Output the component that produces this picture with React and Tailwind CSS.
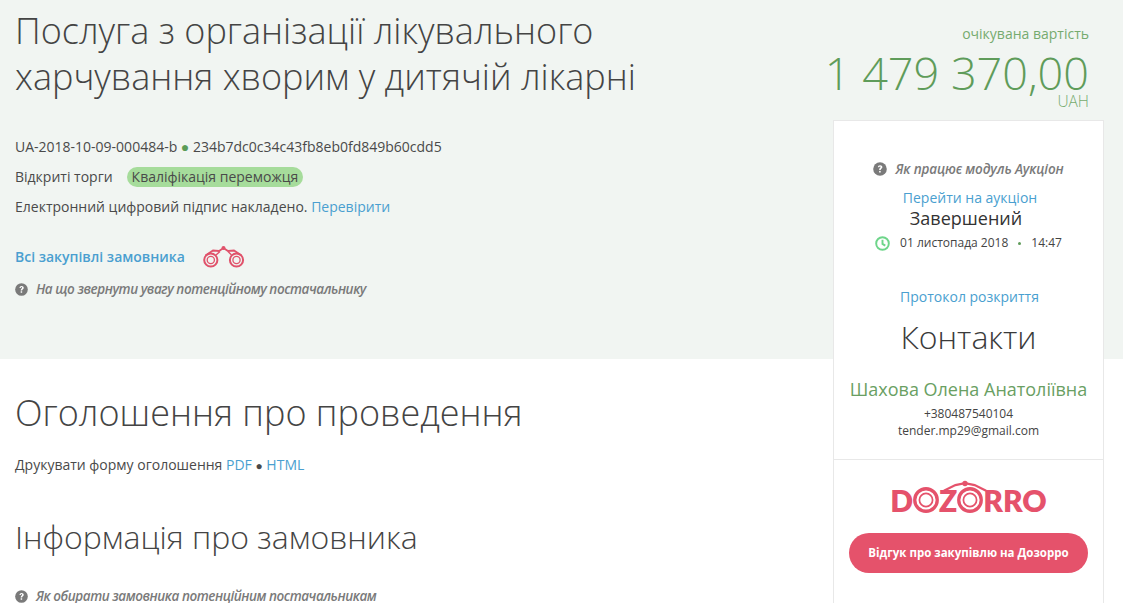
import React from "react";

const QuestionIcon = ({ className }) => (
  <svg viewBox="0 0 14 14" className={className}>
    <circle cx="7" cy="7" r="6.8" fill="#7a7a7a" />
    <path d="M4.8 5.3C4.9 4 5.9 3.2 7.1 3.2c1.3 0 2.3.8 2.3 1.9 0 1.7-1.7 1.6-1.7 3H6.1c0-2.1 1.6-2 1.6-3 0-.4-.3-.7-.7-.7-.5 0-.7.3-.8.9H4.8z" fill="#fff" />
    <rect x="6.1" y="8.9" width="1.6" height="1.6" fill="#fff" />
  </svg>
);

const Binoculars = ({ className }) => (
  <svg viewBox="0 0 42 23" className={className} fill="none" stroke="#e0526b">
    <circle cx="7.8" cy="15" r="6.6" strokeWidth="2" />
    <circle cx="7.8" cy="15" r="3.6" strokeWidth="1.3" />
    <circle cx="33.5" cy="15" r="6.6" strokeWidth="2" />
    <circle cx="33.5" cy="15" r="3.6" strokeWidth="1.3" />
    <path d="M2.5 10.5 L10 5.5 L16 6 L20.5 3 L25 6 L31 5.5 L38.5 10.5" strokeWidth="1.8" />
    <path d="M13 10 L17 6.5 M28.5 10 L25 6.5" strokeWidth="1.4" />
    <circle cx="20.5" cy="3" r="2" fill="#e0526b" stroke="none" />
  </svg>
);

const Ring = () => (
  <svg viewBox="0 0 30 30" className="w-[26px] h-[26px] shrink-0" fill="none" stroke="#e5526b">
    <circle cx="15" cy="15" r="13" strokeWidth="3.8" />
    <circle cx="15" cy="15" r="7.6" strokeWidth="2" />
  </svg>
);

const A = ({ children, className = "" }) => (
  <a href="#" className={"text-[#4a9fd0] " + className}>{children}</a>
);

export default function App() {
  return (
    <div className="h-[603px] overflow-hidden flex bg-[linear-gradient(#f1f5f2_359px,#ffffff_359px)] text-[#4a4a4a] font-['Open_Sans',sans-serif]">
      <main className="flex-1 min-w-0 pl-[15px]">
        <h1 className="mt-[8px] text-[36px] leading-[46px] font-light text-[#444]">
          Послуга з організації лікувального
          <br />
          харчування хворим у дитячій лікарні
        </h1>
        <div className="mt-[37px] text-[14px] leading-[20px]">
          UA-2018-10-09-000484-b <span className="text-[#5b9c57]">●</span> 234b7dc0c34c43fb8eb0fd849b60cdd5
        </div>
        <div className="mt-[10px] flex items-center text-[14px] leading-[20px]">
          <span>Відкриті торги</span>
          <span className="ml-[14px] rounded-full bg-[#a6dc9b] px-[5px]">Кваліфікація переможця</span>
        </div>
        <div className="mt-[10px] text-[14px] leading-[20px]">
          Електронний цифровий підпис накладено. <A>Перевірити</A>
        </div>
        <div className="mt-[28px] flex items-center">
          <A className="text-[14px] leading-[20px] font-semibold">Всі закупівлі замовника</A>
          <Binoculars className="ml-[18px] w-[42px] h-[23px]" />
        </div>
        <div className="mt-[11px] flex items-center text-[13.5px] tracking-[-0.45px] leading-[20px] italic font-semibold text-[#7a7a7a]">
          <QuestionIcon className="w-[13px] h-[13px] mr-[8px]" />
          На що звернути увагу потенційному постачальнику
        </div>
        <h2 className="mt-[91px] text-[36px] leading-[46px] font-light text-[#444]">Оголошення про проведення</h2>
        <div className="mt-[19px] text-[14px] leading-[20px]">
          Друкувати форму оголошення <A>PDF</A> <span className="text-[12px]">●</span> <A>HTML</A>
        </div>
        <h3 className="mt-[40px] text-[32px] leading-[42px] font-light text-[#444]">Інформація про замовника</h3>
        <div className="mt-[28px] flex items-center text-[13.5px] tracking-[-0.45px] leading-[20px] italic font-semibold text-[#7a7a7a]">
          <QuestionIcon className="w-[13px] h-[13px] mr-[8px]" />
          Як обирати замовника потенційним постачальникам
        </div>
      </main>

      <aside className="w-[271px] mr-[19px] shrink-0">
        <div className="h-[120px] pt-[24px] text-right pr-[15px] text-[#5f9c5a]">
          <div className="text-[14px] leading-[20px] text-[#76ab6f]">очікувана вартість</div>
          <div className="text-[45px] leading-[40px] font-light mt-[9px] whitespace-nowrap flex justify-end">1 479 370,00</div>
          <div className="text-[15.5px] leading-[14px] font-light mt-[1px] text-[#76ab6f]">UAH</div>
        </div>
        <div className="h-[483px] bg-white border-x border-t border-[#e8e8e8] text-center">
          <div className="pt-[38px] flex justify-center items-center text-[13.5px] tracking-[-0.15px] leading-[20px] italic font-semibold text-[#7a7a7a]">
            <QuestionIcon className="w-[14px] h-[14px] mr-[8px]" />
            Як працює модуль Аукціон
          </div>
          <A className="block mt-[9px] pl-[3px] text-[14px] leading-[20px]">Перейти на аукціон</A>
          <div className="-ml-[5px] -mt-[1px] text-[18px] leading-[22px] text-[#333]">Завершений</div>
          <div className="mt-[4px] flex justify-center items-center text-[12px] leading-[20px] text-[#444]">
            <svg viewBox="0 0 14 14" className="w-[15px] h-[15px] mr-[10px]" fill="none" stroke="#6ed58a" strokeWidth="1.8">
              <circle cx="7" cy="7" r="5.9" />
              <path d="M7 3.5V7.4L9.6 9" />
            </svg>
            <span>01 листопада 2018</span>
            <span className="mx-[10px] w-[3px] h-[3px] bg-[#5f9c5a] rounded-full" />
            <span>14:47</span>
          </div>
          <A className="block mt-[34px] pl-[2px] text-[14px] leading-[20px]">Протокол розкриття</A>
          <div className="mt-[9px] text-[32px] leading-[42px] font-light text-[#3a3a3a]">Контакти</div>
          <div className="mt-[19px] text-[18px] leading-[24px] text-[#6a9f63]">Шахова Олена Анатоліївна</div>
          <div className="mt-[5px] text-[12px] leading-[16px] text-[#444]">+380487540104</div>
          <div className="text-[12px] leading-[17px] text-[#444]">tender.mp29@gmail.com</div>
          <div className="mt-[20px] border-t border-[#e8e8e8] pt-[20px]">
            <div className="relative flex justify-center items-center h-[40px] text-[30px] leading-[30px] font-extrabold text-[#e5526b] font-['Lato',sans-serif]">
              <span>D</span>
              <Ring />
              <span>Z</span>
              <Ring />
              <span>RRO</span>
              <svg viewBox="0 0 50 12" className="absolute left-1/2 -translate-x-[28px] top-[0px] w-[48px] h-[12px]" fill="none" stroke="#e5526b" strokeWidth="2.4">
                <path d="M3 11 L15 5 L25 3 L35 5 L47 11" />
                <circle cx="25" cy="3.4" r="2.8" fill="#e5526b" stroke="none" />
              </svg>
            </div>
            <button className="mt-[13px] mx-auto block w-[239px] h-[40px] rounded-full bg-[#e5526b] text-white text-[11.5px] font-bold">
              Відгук про закупівлю на Дозорро
            </button>
          </div>
        </div>
      </aside>
    </div>
  );
}
